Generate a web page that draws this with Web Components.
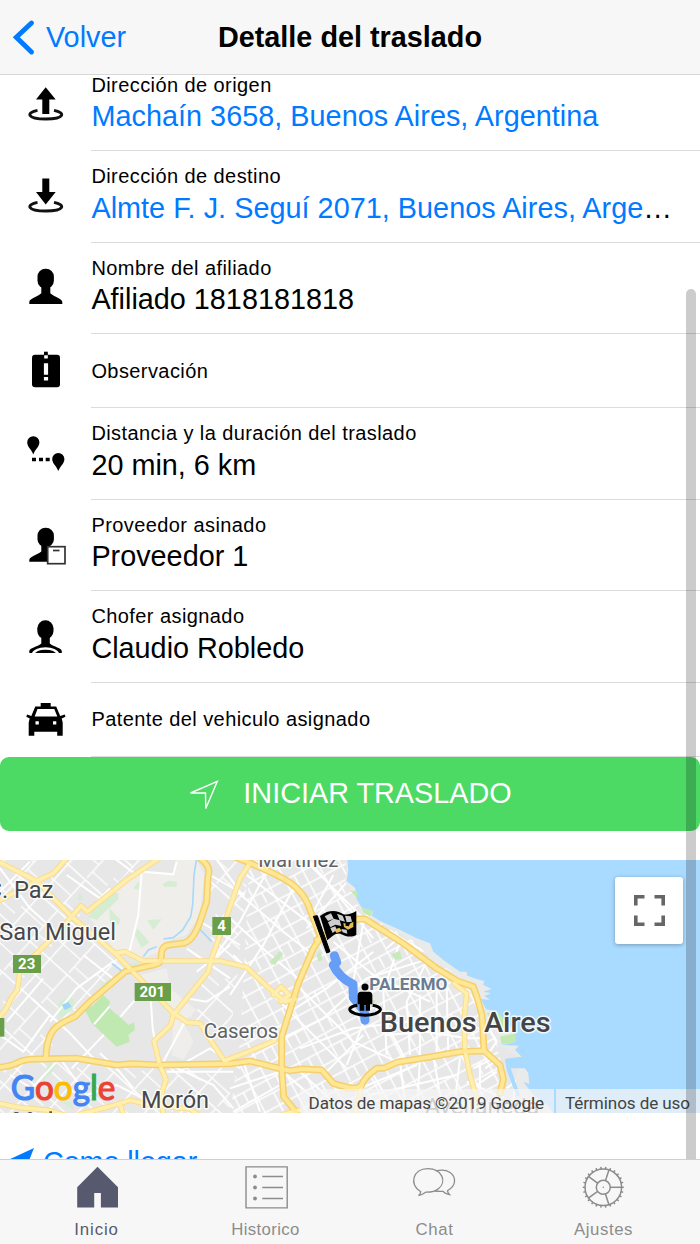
<!DOCTYPE html>
<html lang="es">
<head>
<meta charset="UTF-8">
<meta name="viewport" content="width=device-width, initial-scale=1">
<title>Detalle del traslado</title>
<style>
  html, body { height: 100%; }
  body {
    margin: 0;
    overflow: hidden;
    background: #fff;
    color: #000;
    font-family: "Liberation Sans", Arial, sans-serif;
    font-size: 28.8px;
  }
</style>
</head>
<body>
<transfer-page>
  <nav-header slot="header" back="Volver">Detalle del traslado</nav-header>

  <detail-row icon="origin" label="Dirección de origen"><a>Machaín 3658, Buenos Aires, Argentina</a></detail-row>
  <detail-row icon="destination" label="Dirección de destino"><a>Almte F. J. Seguí 2071, Buenos Aires, Argentina</a></detail-row>
  <detail-row icon="person" label="Nombre del afiliado">Afiliado 1818181818</detail-row>
  <detail-row icon="note" label="Observación" short></detail-row>
  <detail-row icon="distance" label="Distancia y la duración del traslado">20 min, 6 km</detail-row>
  <detail-row icon="provider" label="Proveedor asinado">Proveedor 1</detail-row>
  <detail-row icon="driver" label="Chofer asignado">Claudio Robledo</detail-row>
  <detail-row icon="taxi" label="Patente del vehiculo asignado" short></detail-row>
  <action-button icon="navigate">INICIAR TRASLADO</action-button>
  <route-map></route-map>
  <link-button icon="navigateFill">Como llegar</link-button>

  <tab-bar slot="footer">
    <tab-item icon="home" active style="letter-spacing: .9px">Inicio</tab-item>
    <tab-item icon="list" style="letter-spacing: .35px">Historico</tab-item>
    <tab-item icon="chat" style="letter-spacing: .6px">Chat</tab-item>
    <tab-item icon="gear" style="letter-spacing: .6px">Ajustes</tab-item>
  </tab-bar>
</transfer-page>

<script>
const gearTeeth = Array.from({ length: 26 }, (_, i) =>
  `<path d="M39 21h2.500" transform="rotate(${i * 360 / 26} 21 21)"/>`).join('');
const gearSpokes = Array.from({ length: 5 }, (_, i) =>
  `<path d="M28 21h11.500" transform="rotate(${i * 72} 21 21)"/>`).join('');

const ICONS = {
  origin: `<path d="M19.700 2.300 29.700 14.500H23.300V29H16.300V14.500H10z"/>
    <path d="M11.500 25.300C0 27.500 0.500 34 19.800 34S39.500 27.500 28 25.300" fill="none" stroke="#111" stroke-width="2.900"/>`,
  destination: `<path d="M16.300 1.600h7V15h6.400L19.700 27.500 10 15h6.300z"/>
    <path d="M11.500 25.300C0 27.500 0.500 34 19.800 34S39.500 27.500 28 25.300" fill="none" stroke="#111" stroke-width="2.900"/>`,
  person: `<rect x="11.500" y=".7" width="16.400" height="20" rx="8"/>
    <path d="M3.300 36v-2c0-3.500 8-5 12-8.700v-8h9v8c4 3.700 12 5.200 12 8.700v2z"/>`,
  note: `<rect x="6" y="3.700" width="28" height="32.600" rx="3"/><rect x="18" y=".7" width="3.800" height="4"/>
    <path d="M18.200 4.200h3.600v3.200h-3.600zM17.900 12.200h4.200v11.600h-4.200zM17.900 26h4.200v3.600h-4.200z" fill="#fff"/>`,
  distance: `<path d="M7.300 20.500C5 15 1.200 12.800 1.200 8.300a6.100 6.100 0 0 1 12.200 0c0 4.500-4 6.700-6.100 12.200z"/>
    <path d="M32.300 37c-2-5.300-6.100-7.500-6.100-12a6.100 6.100 0 0 1 12.200 0c0 4.500-4 6.700-6.100 12z"/>
    <path d="M6 23.800h4v3.500H6zM13 23.800h4v3.500h-4zM19.700 23.800h4v3.500h-4z"/>`,
  provider: `<rect x="11.500" y="2.700" width="16.400" height="19.500" rx="8"/>
    <path d="M3.300 36.800v-1.500c0-4 8-5 12-8.700v-8h9v18.200z"/>
    <rect x="21.700" y="21.700" width="17.300" height="17" fill="#fff" stroke="#333" stroke-width="1.700"/>
    <path d="M27 25.500h6.500" stroke="#333" stroke-width="1.700"/>`,
  driver: `<rect x="11.300" y="3.300" width="16.200" height="18.700" rx="8"/>
    <path d="M3.300 36v-1.700c0-3.500 8-4.300 12-7.800v-8h8.500v8c4 3.500 12 4.300 12 7.800V36z"/>
    <path d="M6.500 37.300c4-7.800 22-7.800 26 0" fill="none" stroke="#fff" stroke-width="2.600"/>`,
  taxi: `<path d="M14.700 3h10v3.500h5.500l4 9.500 4.500-1.500.8 2.300-3.800 1.700 1 4v13.200h-5.500v-4H8.300v4H2.700V22.500l1-4L.3 16.800l.8-2.300L5.300 16l4-9.500h5.400z"/>
    <path d="M11.500 9h16.800l3 7.500H8.700zM9.500 21.300h3.300v3.300H9.500zM27 21.300h3.300v3.300H27z" fill="#fff"/>`,
  navigate: `<path d="M29.300 1.300 2.500 13H17.500L17.800 28.500z" fill="none" stroke="currentColor" stroke-width="1.400"/>`,
  navigateFill: `<path d="M27 0 0 12.500h15.500V29z"/>`,
  back: `<path d="M19.500 3 4.300 17.300 19.500 32" fill="none" stroke="currentColor" stroke-width="4.900" stroke-linecap="round"/>`,
  home: `<path d="M21.500.8 42 21.200V41.500H24.900V27h-6.700v14.500H1.200V21.200z"/>`,
  list: `<g fill="none" stroke="currentColor" stroke-width="1.400"><path d="M1 .9h41.200v41H1z"/>
    <path d="M17.300 10.500H38M17.300 21.500H38M17.300 32.500H38"/></g>
    <circle cx="10" cy="10.500" r="1.900"/><circle cx="10" cy="21.500" r="1.900"/><circle cx="10" cy="32.500" r="1.900"/>`,
  chat: `<g fill="none" stroke="currentColor" stroke-width="1.300" transform="translate(-1.800 0)">
    <path d="M8.500 25.800C-3.500 19 .5 2.600 15.500 2.600S34.500 16 26.500 22.500C22.500 26 18 26.300 13.500 26.200 11.500 27.600 9.500 29 6.300 29.500 7.800 28.500 8.300 27.300 8.500 25.800z"/>
    <path d="M23.500 5C36 2 43 8.500 42.300 15.800 42 20 39 22.500 35.300 24.800 35.500 26.500 36.300 27.700 37.300 28.600 34 28.300 32 26.800 30.500 25.300 27.500 25.700 25.500 25.500 22.500 25"/></g>`,
  gear: `<g transform="translate(-.700 .300)"><g fill="none" stroke="currentColor" stroke-width="1.500"><circle cx="21" cy="21" r="18.300"/>
    <circle cx="21" cy="21" r="7"/>${gearTeeth}${gearSpokes}</g><circle cx="21" cy="21" r=".8"/></g>`
};

class AppIcon extends HTMLElement {
  connectedCallback() {
    this.attachShadow({ mode: 'open' });
    this.shadowRoot.innerHTML = `
      <style>
        :host { display: block; flex: none; }
        svg { display: block; width: 100%; height: 100%; overflow: visible; fill: currentColor; }
      </style>
      <svg aria-hidden="true">${ICONS[this.getAttribute('name')]}</svg>
    `;
  }
}
customElements.define('app-icon', AppIcon);

class TransferPage extends HTMLElement {
  connectedCallback() {
    this.attachShadow({ mode: 'open' });
    this.shadowRoot.innerHTML = `
      <style>
        :host { display: grid; grid-template-rows: 75px 1fr 85px; height: 1244px; width: 700px; }
        main { position: relative; overflow: hidden; min-height: 0; }
        .scrolled { display: flex; flex-direction: column; margin-top: -15.4px; }
        .scrollbar {
          position: absolute;
          top: 214px;
          right: 4px;
          width: 10px;
          height: 900px;
          border-radius: 5px;
          background: rgba(0, 0, 0, .2);
        }
      </style>
      <slot name="header"></slot>
      <main>
        <div class="scrolled"><slot></slot></div>
        <div class="scrollbar"></div>
      </main>
      <slot name="footer"></slot>
    `;
  }
}
customElements.define('transfer-page', TransferPage);

class NavHeader extends HTMLElement {
  connectedCallback() {
    this.attachShadow({ mode: 'open' });
    this.shadowRoot.innerHTML = `
      <style>
        :host {
          display: grid;
          grid-template-columns: 1fr auto 1fr;
          align-items: center;
          box-sizing: border-box;
          background: #f7f7f7;
          border-bottom: 1px solid #d8d8d8;
        }
        .back { display: flex; align-items: center; gap: 10px; padding-left: 12px; color: #007aff; }
        app-icon { width: 24px; height: 35px; }
        h1 { margin: 0; font-size: inherit; font-weight: bold; }
      </style>
      <div class="back"><app-icon name="back"></app-icon><span>${this.getAttribute('back')}</span></div>
      <h1><slot></slot></h1>
    `;
  }
}
customElements.define('nav-header', NavHeader);

class DetailRow extends HTMLElement {
  connectedCallback() {
    this.attachShadow({ mode: 'open' });
    this.shadowRoot.innerHTML = `
      <style>
        :host { display: grid; grid-template-columns: 91.400px minmax(0, 1fr); height: 91.500px; }
        :host([short]) { height: 74.100px; }
        app-icon { width: 40px; height: 40px; margin-left: 26px; align-self: center; }
        .body {
          display: flex;
          flex-direction: column;
          justify-content: center;
          box-sizing: border-box;
          padding-right: 14px;
          border-bottom: 1px solid #dcdcdc;
        }
        .label { font-size: 20px; line-height: 24px; letter-spacing: .42px; white-space: nowrap; }
        .value {
          margin: 2.500px 0 3px;
          line-height: 35px;
          white-space: nowrap;
          overflow: hidden;
          text-overflow: ellipsis;
        }
        :host([short]) .value { display: none; }
        ::slotted(a) { color: #007aff; letter-spacing: .03px; }
      </style>
      <app-icon name="${this.getAttribute('icon')}"></app-icon>
      <div class="body">
        <div class="label">${this.getAttribute('label')}</div>
        <div class="value"><slot></slot></div>
      </div>
    `;
  }
}
customElements.define('detail-row', DetailRow);

class ActionButton extends HTMLElement {
  connectedCallback() {
    this.attachShadow({ mode: 'open' });
    this.shadowRoot.innerHTML = `
      <style>
        :host { display: block; height: 74.200px; margin-bottom: 28.700px; }
        button {
          display: flex;
          align-items: center;
          justify-content: center;
          gap: 25px;
          width: 100%;
          height: 100%;
          padding: 0;
          border: 0;
          border-radius: 9px;
          background: #4cd964;
          color: #fff;
          font: inherit;
        }
        app-icon { width: 30px; height: 30px; margin-top: 2px; }
      </style>
      <button><app-icon name="${this.getAttribute('icon')}"></app-icon><span><slot></slot></span></button>
    `;
  }
}
customElements.define('action-button', ActionButton);

class LinkButton extends HTMLElement {
  connectedCallback() {
    this.attachShadow({ mode: 'open' });
    this.shadowRoot.innerHTML = `
      <style>
        :host { display: flex; gap: 9px; padding: 33px 0 0 7px; color: #007aff; line-height: 33px; letter-spacing: -.1px; }
        app-icon { width: 27px; height: 29px; margin-top: 2px; }
      </style>
      <app-icon name="${this.getAttribute('icon')}"></app-icon><span><slot></slot></span>
    `;
  }
}
customElements.define('link-button', LinkButton);

class TabBar extends HTMLElement {
  connectedCallback() {
    this.attachShadow({ mode: 'open' });
    this.shadowRoot.innerHTML = `
      <style>
        :host {
          display: grid;
          grid-template-columns: repeat(4, 1fr);
          box-sizing: border-box;
          padding: 0 12px;
          background: #f7f7f7;
          border-top: 1px solid #cfcfcf;
        }
      </style>
      <slot></slot>
    `;
  }
}
customElements.define('tab-bar', TabBar);

class TabItem extends HTMLElement {
  connectedCallback() {
    this.attachShadow({ mode: 'open' });
    this.shadowRoot.innerHTML = `
      <style>
        :host {
          display: flex;
          flex-direction: column;
          align-items: center;
          gap: 12px;
          padding-top: 6px;
          color: #8c8c8c;
          font-size: 16.800px;
          line-height: 20px;
        }
        :host([active]) { color: #575a6f; }
        app-icon { width: 42px; height: 42px; }
      </style>
      <app-icon name="${this.getAttribute('icon')}"></app-icon>
      <span><slot></slot></span>
    `;
  }
}
customElements.define('tab-item', TabItem);

// Map geometry is in units of a third of a pixel
const HIGHWAYS = [
  'M600 10Q635 35 624 65L620 140 600 200Q580 258 550 265L505 270Q486 275 485 292L482 318Q478 328 450 332L375 350 270 440 225 485Q180 505 165 520 140 545 138 605',
  'M-5 637Q30 635 55 622 80 610 120 612L230 610Q290 620 350 630L395 626 480 630 690 626 750 618 845 642 870 647 905 642 965 645 1000 685Q1050 702 1072 698L1085 690Q1090 670 1130 640L1150 640 1190 622 1290 606 1380 590 1452 587 1500 630 1510 672 1500 715',
  'M690 0 750 24 820 55Q880 85 895 105 920 130 930 165L960 240',
  'M950 255Q985 235 1020 215L1075 192 1095 192 1210 265 1310 340 1372 378 1420 395 1432 430 1446 480 1452 587',
  'M960 250 940 280 895 385 845 545 845 640 851 725 895 780'
];
const ROADS = [
  'M0 22 110 78 215 185 345 295 520 475 562 502 600 505 625 545 675 620',
  'M-5 138 40 115 110 78 160 55 200 10',
  'M-5 490 18 462 32 432 52 405 60 345 110 295 160 245 215 185 243 152 262 170 380 75 480 8',
  'M345 295 375 290 430 318 660 318 740 337 775 370 830 420 855 440 885 432M820 420 843 395 868 420 842 440',
  'M750 24 720 70 692 150 635 310 625 350 520 480 512 510 462 558 478 625 498 675 485 715 490 780',
  'M680 615 745 590 825 557',
  'M1362 385 1400 415 1392 500 1395 585 1410 660 1430 730',
  'M-5 745 60 758 140 765 200 782M240 778 345 750 390 736 430 745 500 755 570 762 595 780M370 778 360 748',
  'M1085 690 1065 780M850 778 900 765'
];
const STREETS = [
  'M425 50 415 180 388 290M430 50 520 58 530 20M452 430 458 520 465 560M520 490 560 430 620 440 690 395M440 395 335 515 215 640M270 440 345 375 250 300M95 430 210 535 290 620M0 540 70 590 150 480M130 370 20 500M150 500 230 400 340 320M300 595 350 640 400 700M560 490 490 620 640 690 700 760M560 620 630 580 720 640M500 650 700 650M170 620 95 700 30 660M180 610 260 720 350 690 430 730M0 40 90 160 190 250M90 20 0 110M200 60 300 130 330 100M330 0 410 60M640 0 720 110 690 130M630 60 735 120M560 280 690 370M590 350 690 270M600 200 720 270',
  'M700 100 850 230 940 300M690 190 800 290 905 380M740 60 950 220M800 50 720 200 640 310M880 100 790 270 690 420M700 300 900 500 1040 640M900 400 1060 560 1190 620M870 470 980 400 1120 290M845 550 970 490 1100 370 1290 310M1000 60 940 170M930 20 1030 140 1120 250M900 0 1090 190M1050 70 920 220M1000 260 1120 360 1290 440M1090 200 1060 380M1200 260 1150 410 1160 600M1280 320 1220 440 1230 600M1100 480 1040 630M1130 450 1220 620M900 580 1060 520 1220 500M1160 540 1280 530 1400 550M1260 420 1260 600M1310 400 1310 600M1340 400 1345 600M980 650 1090 540M690 700 840 650M700 770 840 690M730 620 780 770M860 660 1000 780M900 650 1020 760M1120 660 1190 780M1080 700 1250 630M1200 620 1220 780M1260 610 1250 780M1300 600 1330 780M1110 720 1370 660M1380 610 1360 780M1400 550 1440 550M1420 640 1480 610M1430 690 1490 650M1400 680 1490 720M1440 620 1440 700M1400 520 1440 520M1170 225 1195 250 1160 280M1195 245 1310 310 1370 360'
];

class RouteMap extends HTMLElement {
  connectedCallback() {
    this.attachShadow({ mode: 'open' });
    this.shadowRoot.innerHTML = `
      <style>
        :host { display: block; position: relative; height: 253px; font-family: Roboto, sans-serif; }
        svg.map { display: block; width: 700px; height: 253px; }
        .street { fill: none; stroke: #fff; stroke-width: 6; }
        .case, .fill { fill: none; stroke-linejoin: round; stroke-linecap: round; }
        .case { stroke: #f9dc8d; stroke-width: 17; }
        .fill { stroke: #ffeeac; stroke-width: 11; }
        .hw.case { stroke: #f5cf6d; stroke-width: 21; }
        .hw.fill { stroke: #ffe793; stroke-width: 12; }
        .place { fill: #46484b; stroke: #fff; stroke-width: 9; stroke-opacity: .8; paint-order: stroke; stroke-linejoin: round; }
        .shield { fill: #689f48; }
        .number { fill: #fff; font-weight: 700; font-size: 45px; text-anchor: middle; }
        .logo tspan { stroke-width: 3.500; }
        .g-blue { fill: #4285f4; stroke: #4285f4; }
        .g-red { fill: #ea4335; stroke: #ea4335; }
        .g-yellow { fill: #fbbc05; stroke: #fbbc05; }
        .g-green { fill: #34a853; stroke: #34a853; }
        .fullscreen {
          position: absolute;
          top: 17px;
          left: 615px;
          display: grid;
          place-items: center;
          width: 68px;
          height: 67px;
          border-radius: 3px;
          background: #fff;
          box-shadow: 0 1px 4px rgba(0, 0, 0, .3);
        }
        .fullscreen svg { width: 31px; height: 31px; fill: none; stroke: #666; stroke-width: 3.600; }
        .credits {
          position: absolute;
          right: 0;
          bottom: 0;
          display: flex;
          gap: 2px;
          height: 24px;
          color: #444;
          font-size: 17.100px;
          line-height: 28px;
          letter-spacing: -.1px;
          white-space: nowrap;
        }
        .credits span { background: rgba(245, 245, 245, .7); padding: 0 10px 0 9px; overflow: hidden; }
      </style>
      <svg class="map" viewBox="0 15 2100 759" preserveAspectRatio="none">
        <defs>
          <pattern id="blocks" width="150" height="124" patternUnits="userSpaceOnUse" patternTransform="rotate(42)">
            <path class="street" style="stroke-width:4" d="M0 8H150M20 0V124M0 72H90M90 8V124M90 100H150"/>
          </pattern>
          <pattern id="dense" width="110" height="84" patternUnits="userSpaceOnUse" patternTransform="rotate(-28)">
            <path class="street" style="stroke-width:4.500" d="M0 6H110M10 0V84M0 48H110M60 6V84M90 48V84"/>
          </pattern>
        </defs>
        <rect y="0" width="2100" height="800" fill="#e7e7e7"/>
        <path d="M0 0H440L230 200 390 350 240 480 130 600 0 620z" fill="url(#blocks)"/>
        <path d="M0 620H690V780H0zM610 0H750L690 560 560 480 640 310z" fill="url(#blocks)"/>
        <path d="M750 0H1040L1380 360 1480 480 1520 780H690L720 560z" fill="url(#dense)"/>
        <path d="M425 50 380 80 262 180 345 285 430 310 480 290 490 262 560 240 600 180 612 60 590 15H530L520 55z" fill="#efeeea"/>
        <path d="M420 360 500 340 510 400 590 465 550 500 580 560 550 615 515 600 520 480z" fill="#efeeea"/>
        <path d="M232 135 240 110 250 135zM262 185 320 115 355 115 355 132 290 195zM328 160 362 195 355 210 330 207zM442 195 485 193 460 225zM412 220 448 262 425 278 405 240zM400 100 418 78 418 105zM488 88 505 78 530 80 530 95 492 95zM300 390 335 370 390 325 425 322 380 350 320 405zM175 445 205 422 222 435 218 465 175 492zM135 650 145 625 170 628 155 655 125 680zM185 740 215 742 222 765z" fill="#d5edd3"/>
        ${STREETS.map(d => `<path class="street" d="${d}"/>`).join('')}
        <path d="M255 465 280 450 310 420 330 440 325 455 345 475 360 485 385 510 403 502 404 525 385 540 389 560 350 575 275 505z" fill="#bfe9b0"/>
        <path d="M328 455 282 508" class="street"/>
        <path d="M185 450 205 440 215 455 195 465z" fill="#9fd5f7"/>
        <path d="M808 322 840 288 850 296 825 330zM950 300 960 285 968 315 955 320zM1175 298 1200 287 1205 312 1185 315zM1110 430 1126 437 1118 450z" fill="#c6eabd"/>
        <path d="M590 10 582 60 578 150 572 185 548 225 520 248 490 252M470 275 445 285 430 305M597 220 635 260M335 325 365 348" fill="none" stroke="#a9d9fb" stroke-width="5"/>
        <path d="M1030 10 1042 40 1035 80 1070 125 1075 155 1110 185 1180 225 1245 260 1300 320 1350 345 1420 420 1450 480 1500 570 1560 610 1540 700 1640 780H1800V10z" fill="#e9eaea"/>
        <path class="street" d="M1465 515 1490 560 1462 600M1455 640 1500 610M1520 700 1545 680 1540 740"/>
        <path d="M1042 10 1045 45 1040 78 1065 98 1070 132 1085 158 1120 168 1115 182 1140 198 1200 225 1250 250 1290 265 1300 290 1330 315 1380 350 1400 350 1402 362 1430 372 1452 378 1450 390 1475 402 1450 410 1474 415 1453 422 1470 435 1442 432 1458 462 1490 470 1540 525 1547 560 1505 570 1557 572 1545 585 1565 605 1515 612 1520 645 1550 725 1560 720 1532 640 1575 640 1585 655 1588 688 1570 680 1600 720 1645 752 1670 790H2110V0z" fill="#a9daff"/>
        <path d="M1052 108 1072 108 1072 128zM1085 158 1120 168 1110 185 1090 172zM1460 475 1490 468 1510 490 1512 520 1485 510zM1500 545 1545 535 1547 560 1505 568z" fill="#bfeab0"/>
        ${ROADS.map(d => `<path class="case" d="${d}"/>`).join('')}
        ${HIGHWAYS.map(d => `<path class="hw case" d="${d}"/>`).join('')}
        ${ROADS.map(d => `<path class="fill" d="${d}"/>`).join('')}
        ${HIGHWAYS.map(d => `<path class="hw fill" d="${d}"/>`).join('')}

        <path d="M1003 302 1010 322 1000 330Q1015 365 1059 388L1060 428 1093 468 1095 496" fill="none" stroke="#669df6" stroke-width="27" stroke-linecap="round" stroke-linejoin="round"/>

        <rect class="shield" x="637" y="186" width="56" height="54"/><text class="number" x="665" y="229">4</text>
        <rect class="shield" x="39" y="300" width="84" height="54"/><text class="number" x="80" y="343">23</text>
        <rect class="shield" x="404" y="384" width="109" height="54"/><text class="number" x="457" y="427">201</text>
        <rect class="shield" x="-10" y="489" width="23" height="56"/>
        <g class="place">
          <text x="-40" y="129" font-size="72" textLength="200" lengthAdjust="spacingAndGlyphs">C. Paz</text>
          <text x="-2" y="256" font-size="72" textLength="350" lengthAdjust="spacingAndGlyphs">San Miguel</text>
          <text x="423" y="760" font-size="72" textLength="204" lengthAdjust="spacingAndGlyphs">Morón</text>
          <text x="611" y="549" font-size="60" textLength="224" lengthAdjust="spacingAndGlyphs" fill="#5f6368">Caseros</text>
          <text x="775" y="35" font-size="60" textLength="240" lengthAdjust="spacingAndGlyphs" fill="#5f6368">Martínez</text>
          <text x="1274" y="777" font-size="66" textLength="344" lengthAdjust="spacingAndGlyphs" fill="#777">Avellaneda</text>
          <text x="1108" y="404" font-size="48" font-weight="700" textLength="234" lengthAdjust="spacingAndGlyphs" fill="#6b7c90">PALERMO</text>
          <text x="1139" y="532" font-size="82" font-weight="500" textLength="513" lengthAdjust="spacingAndGlyphs" fill="#444">Buenos Aires</text>
        </g>
        <path d="M43 771h12v5h-12zM85 771h10v5h-10zM148 769h8v8h-8z" fill="#555"/>
        <text class="logo" x="32" y="736" font-family="Lato, sans-serif" font-size="103" textLength="314" lengthAdjust="spacingAndGlyphs"><tspan class="g-blue">G</tspan><tspan class="g-red">o</tspan><tspan class="g-yellow">o</tspan><tspan class="g-blue">g</tspan><tspan class="g-green">l</tspan><tspan class="g-red">e</tspan></text>

        <g transform="translate(690 0)">
          <path d="M250 184 262 182 300 290 290 294z" stroke="#000" stroke-width="3"/>
          <path d="M270 183C300 160 325 168 340 178 355 180 365 176 379 168V240C360 250 345 242 330 236 315 234 305 246 292 256z"/>
          <path d="M284 184 303 175 311 191 294 198zM321 176 338 182 345 200 329 196zM311 191 329 196 334 213 316 209zM294 202 311 191 316 209 301 217zM345 182 362 184 366 200 350 202zM301 219 316 214 320 224 308 234zM334 222 350 224 352 236 338 232z" fill="#e4e4e4" opacity=".9"/>
          <path d="M340 204 356 208 370 200V216L354 224 342 216zM312 224 328 218 336 228 320 234z" fill="#e5bd56"/>
          <path d="M348 202 360 206 356 214 346 212z"/>
          <path d="M382 451C358 456 348 465 376 476 393 482 419 482 436 476 462 465 452 456 428 451" fill="none" stroke="#000" stroke-width="9"/>
          <circle cx="405" cy="396" r="10.500"/>
          <path d="M393 410H417Q427 410 427 421V448H420V467H407V450H403V467H389V448H383V421Q383 410 393 410z"/>
        </g>
      </svg>
      <div class="fullscreen">
        <svg viewBox="0 0 31 31"><path d="M1.800 10.500V1.800H10.500M20.500 1.800H29.200V10.500M29.200 20.500V29.200H20.500M10.500 29.200H1.800V20.500"/></svg>
      </div>
      <div class="credits"><span>Datos de mapas ©2019 Google</span><span>Términos de uso</span></div>
    `;
  }
}
customElements.define('route-map', RouteMap);
</script>
</body>
</html>
